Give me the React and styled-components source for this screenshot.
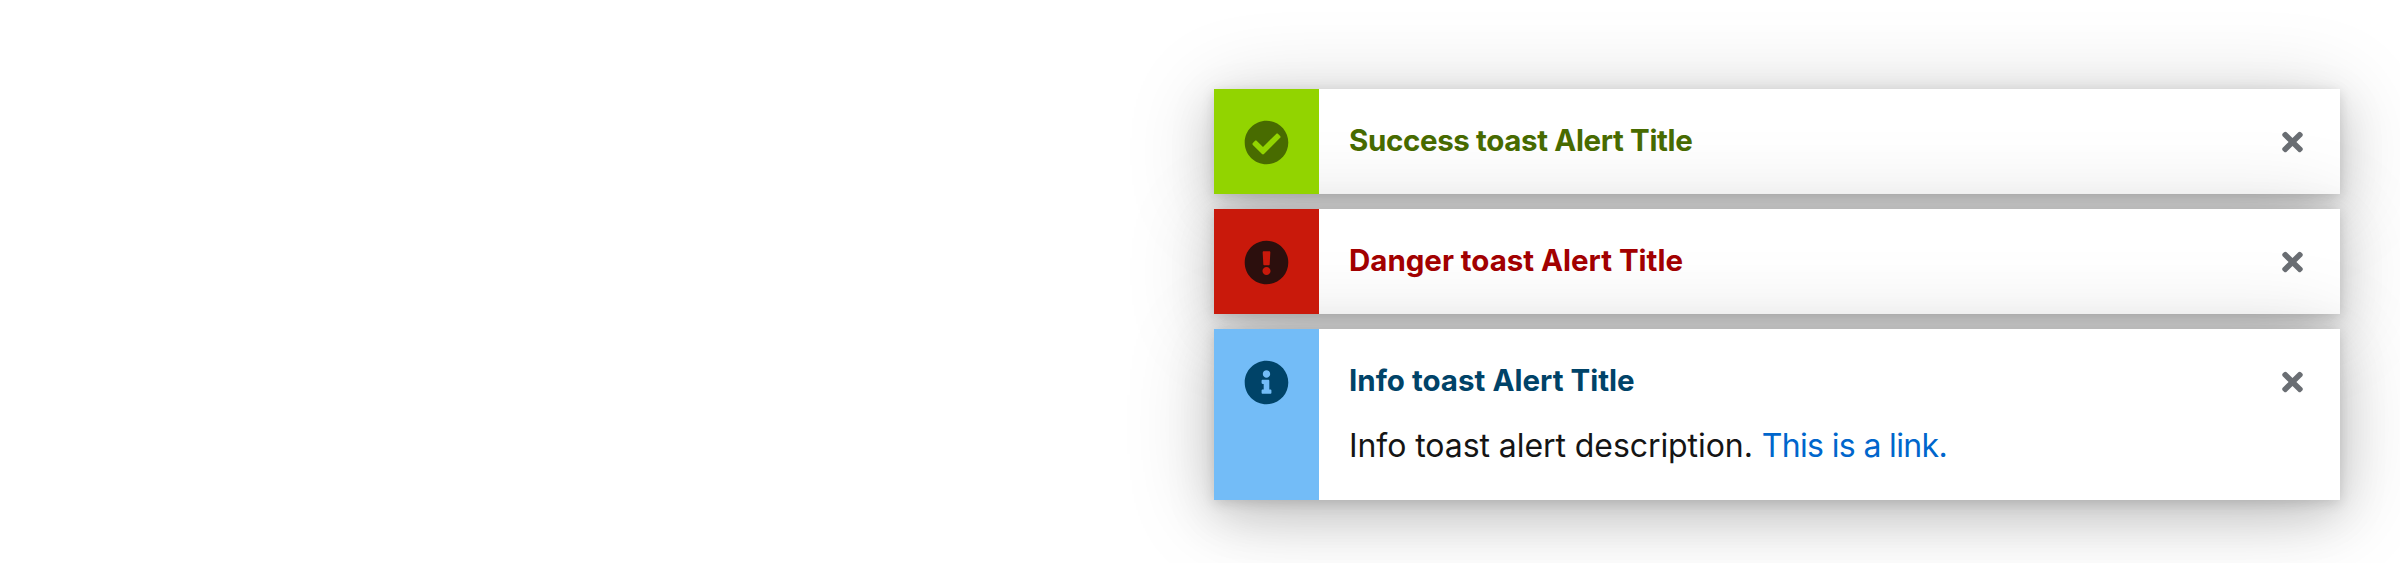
import React from 'react';
import styled, { createGlobalStyle } from 'styled-components';
import { FaCheckCircle, FaExclamationCircle, FaInfoCircle, FaTimes } from 'react-icons/fa';

const GlobalStyle = createGlobalStyle`
  *, *::before, *::after { box-sizing: border-box; }
  body { margin: 0; background: #fff; overflow: hidden; }
`;

const Page = styled.main`
  height: 563px;
  padding: 89px 60px 0 0;
  overflow: hidden;
  font-family: Inter, "Liberation Sans", sans-serif;
`;

const ToastGroup = styled.ul`
  display: flex;
  flex-direction: column;
  gap: 15px;
  width: 1126px;
  margin: 0 0 0 auto;
  padding: 0;
  list-style: none;
`;

const Toast = styled.li`
  position: relative;
  display: grid;
  grid-template-columns: 105px 1fr auto;
  min-height: 105px;
  background: #fff;
  box-shadow:
    0 10px 90px rgba(3, 3, 3, 0.18),
    0 15px 45px rgba(3, 3, 3, 0.15),
    0 3px 12px rgba(3, 3, 3, 0.13);
`;

/* Stays above the shadow that the next toast casts upwards. */
const IconCell = styled.div`
  position: relative;
  z-index: 1;
  display: flex;
  justify-content: center;
  align-items: flex-start;
  padding-top: 31px;
  font-size: 45px;
  color: ${(p) => p.$color};
  background: ${(p) => p.$background};

  svg { display: block; }
`;

const Content = styled.div`
  padding: 29px 0 29px 30px;
`;

const Title = styled.h4`
  margin: 0;
  color: ${(p) => p.$color};
  font-size: 29.5px;
  font-weight: 700;
  line-height: 45px;
  letter-spacing: ${(p) => p.$tracking}px;
`;

const Description = styled.p`
  margin: 18px 0 0;
  color: #151515;
  font-size: 32px;
  line-height: 50px;
  letter-spacing: -0.07px;
`;

const Link = styled.a`
  color: #06c;
  letter-spacing: -0.65px;
  text-decoration: none;
`;

const CloseButton = styled.button`
  display: flex;
  align-items: center;
  height: 45px;
  margin: 30px 37px 0 0;
  padding: 0;
  border: 0;
  background: none;
  color: #6a6e73;
  font-size: 30px;

  svg { width: 21px; }
`;

const toasts = [
  { title: 'Success toast Alert Title', icon: FaCheckCircle, background: '#92d400', iconColor: '#486b00', titleColor: '#486b00', tracking: -0.36 },
  { title: 'Danger toast Alert Title', icon: FaExclamationCircle, background: '#c9190b', iconColor: '#2c0f0d', titleColor: '#a30000', tracking: -0.02 },
  { title: 'Info toast Alert Title', icon: FaInfoCircle, background: '#73bcf7', iconColor: '#004368', titleColor: '#004368', tracking: 0.02,
    description: 'Info toast alert description.', link: 'This is a link.' },
];

export default function App() {
  return (
    <Page>
      <GlobalStyle />
      <ToastGroup>
        {toasts.map(({ title, icon: Icon, background, iconColor, titleColor, tracking, description, link }) => (
          <Toast key={title}>
            <IconCell $color={iconColor} $background={background}><Icon /></IconCell>
            <Content>
              <Title $color={titleColor} $tracking={tracking}>{title}</Title>
              {description && (
                <Description>{description} <Link href="#">{link}</Link></Description>
              )}
            </Content>
            <CloseButton aria-label="Close"><FaTimes /></CloseButton>
          </Toast>
        ))}
      </ToastGroup>
    </Page>
  );
}
